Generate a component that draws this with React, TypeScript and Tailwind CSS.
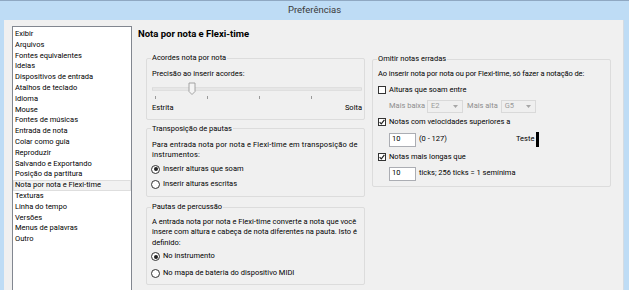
import React from 'react';

const items = [
  'Exibir',
  'Arquivos',
  'Fontes equivalentes',
  'Ideias',
  'Dispositivos de entrada',
  'Atalhos de teclado',
  'Idioma',
  'Mouse',
  'Fontes de músicas',
  'Entrada de nota',
  'Colar como guia',
  'Reproduzir',
  'Salvando e Exportando',
  'Posição da partitura',
  'Nota por nota e Flexi-time',
  'Texturas',
  'Linha do tempo',
  'Versões',
  'Menus de palavras',
  'Outro',
];

function Group({ title, className, children }: { title: string; className?: string; children: React.ReactNode }) {
  return (
    <fieldset className={`border border-[#dcdcdc] rounded-[2px] pl-[5px] ${className ?? ''}`}>
      <legend className="px-[1px] ml-[-1px] leading-[10.5px]">{title}</legend>
      {children}
    </fieldset>
  );
}

function Radio({ checked, label, className }: { checked?: boolean; label: string; className?: string }) {
  return (
    <div className={`flex items-center h-[15px] ml-[-1px] ${className ?? ''}`}>
      <span className="w-[9px] h-[9px] rounded-full border border-[#333333] bg-white flex items-center justify-center">
        {checked && <span className="w-[4px] h-[4px] rounded-full bg-[#222222]" />}
      </span>
      <span className="ml-[3px]">{label}</span>
    </div>
  );
}

function Check({ checked, label, className }: { checked?: boolean; label: string; className?: string }) {
  return (
    <div className={`flex items-center h-[13px] ${className ?? ''}`}>
      <span className="w-[8px] h-[8px] border border-[#333333] bg-white flex items-center justify-center">
        {checked && (
          <svg width="6" height="6" viewBox="0 0 6 6">
            <path d="M0.6 3.1 L2.3 4.8 L5.4 0.9" fill="none" stroke="#222" strokeWidth="1.2" />
          </svg>
        )}
      </span>
      <span className="ml-[3px]">{label}</span>
    </div>
  );
}

function Select({ value, className }: { value: string; className?: string }) {
  return (
    <div className={`h-[13px] shrink-0 border border-[#d9d9d9] bg-[#efefef] flex items-center justify-between pl-[3px] pr-[4px] text-[#9a9a9a] ${className ?? ''}`}>
      <span>{value}</span>
      <svg width="5" height="3" viewBox="0 0 5 3">
        <path d="M0 0 L5 0 L2.5 3 Z" fill="#a6a6a6" />
      </svg>
    </div>
  );
}

function NumberBox({ value }: { value: string }) {
  return (
    <div className="w-[27px] h-[14px] border border-[#abadb3] bg-white flex items-center pl-[2px]">{value}</div>
  );
}

export default function App() {
  return (
    <div className="w-[629px] h-[290px] overflow-hidden bg-[#bedcf5] flex flex-col [font-family:Roboto,sans-serif] text-[7.5px] leading-[10.5px] text-black">
      <div className="h-[20px] shrink-0 border-t border-[#8fa8c2] flex items-center justify-center text-[9.5px] text-[#3a3a3a]">
        Preferências
      </div>
      <div className="flex-1 ml-[4px] mr-[5px] bg-[#f0f0f0] border-r border-[#d3dbe3] flex min-h-0">
        <div className="ml-[8px] mt-[6px] w-[120px] h-[300px] shrink-0 bg-white border border-[#828790] pt-[2px] leading-[10.8px]">
          {items.map((it) => (
            <div
              key={it}
              className={`pl-[2px] h-[10.8px] whitespace-nowrap ${
                it === 'Nota por nota e Flexi-time' ? 'bg-[#f2f2f2] shadow-[inset_0_0_0_1px_#dedede]' : ''
              }`}
            >
              {it}
            </div>
          ))}
        </div>

        <div className="ml-[6px] pt-[8px] flex-1">
          <div className="text-[9.5px] font-bold leading-[12px]">Nota por nota e Flexi-time</div>

          <div className="flex mt-[13px] pl-[8px] gap-[7px]">
            <div className="w-[219px] flex flex-col">
              <Group title="Acordes nota por nota" className="pr-[2px] pb-[5px]">
                <div className="mt-[5px]">Precisão ao inserir acordes:</div>
                <svg width="210" height="24" className="block">
                  <rect x="0.5" y="8.75" width="209" height="2.5" fill="#e9e9e9" stroke="#d6d6d6" strokeWidth="0.8" />
                  <polygon points="37,4 43,4 43,12.5 40,15.5 37,12.5" fill="#f4f4f4" stroke="#9a9a9a" strokeWidth="0.9" />
                  <line x1="3.5" y1="17" x2="3.5" y2="20" stroke="#9a9a9a" />
                  <line x1="55.5" y1="17" x2="55.5" y2="20" stroke="#9a9a9a" />
                  <line x1="107.5" y1="17" x2="107.5" y2="20" stroke="#9a9a9a" />
                  <line x1="159.5" y1="17" x2="159.5" y2="20" stroke="#9a9a9a" />
                </svg>
                <div className="flex justify-between">
                  <span>Estrita</span>
                  <span>Solta</span>
                </div>
              </Group>

              <Group title="Transposição de pautas" className="mt-[4px] pr-[2px] pb-[4.5px]">
                <div className="mt-[5.5px] whitespace-nowrap tracking-[0.15px]">
                  Para entrada nota por nota e Flexi-time em transposição de
                  <br />
                  instrumentos:
                </div>
                <Radio checked label="Inserir alturas que soam" className="mt-[1px]" />
                <Radio label="Inserir alturas escritas" />
              </Group>

              <Group title="Pautas de percussão" className="mt-[5px] pr-[2px] pb-[3px]">
                <div className="mt-[4px] whitespace-nowrap">
                  A entrada nota por nota e Flexi-time converte a nota que você
                  <br />
                  insere com altura e cabeça de nota diferentes na pauta. Isto é
                  <br />
                  definido:
                </div>
                <Radio checked label="No instrumento" className="mt-[1px]" />
                <Radio label="No mapa de bateria do dispositivo MIDI" className="mt-[2px]" />
              </Group>
            </div>

            <div className="w-[239px]">
              <Group title="Omitir notas erradas" className="mt-[1px] pl-[4px] pr-[4px] pb-[5px]">
                <div className="mt-[4.5px] whitespace-nowrap tracking-[-0.1px]">
                  Ao inserir nota por nota ou por Flexi-time, só fazer a notação de:
                </div>
                <Check label="Alturas que soam entre" className="mt-[4px]" />
                <div className="flex items-center h-[13px] mt-[3px] ml-[11px] whitespace-nowrap">
                  <span className="text-[#8d8d8d]">Mais baixa</span>
                  <Select value="E2" className="ml-[2px] w-[36px]" />
                  <span className="ml-[4px] text-[#8d8d8d]">Mais alta</span>
                  <Select value="G5" className="ml-[3px] w-[35px]" />
                </div>
                <Check checked label="Notas com velocidades superiores a" className="mt-[3px]" />
                <div className="flex items-center h-[14px] mt-[4px] ml-[11px] whitespace-nowrap">
                  <NumberBox value="10" />
                  <span className="ml-[3px] w-[97px]">(0 - 127)</span>
                  <span>Teste</span>
                  <span className="ml-[2px] w-[3px] h-[15px] bg-black" />
                </div>
                <Check checked label="Notas mais longas que" className="mt-[4px]" />
                <div className="flex items-center h-[14px] mt-[3px] ml-[11px] whitespace-nowrap">
                  <NumberBox value="10" />
                  <span className="ml-[3px]">ticks; 256 ticks = 1 semínima</span>
                </div>
              </Group>
            </div>
          </div>
        </div>
      </div>
    </div>
  );
}
